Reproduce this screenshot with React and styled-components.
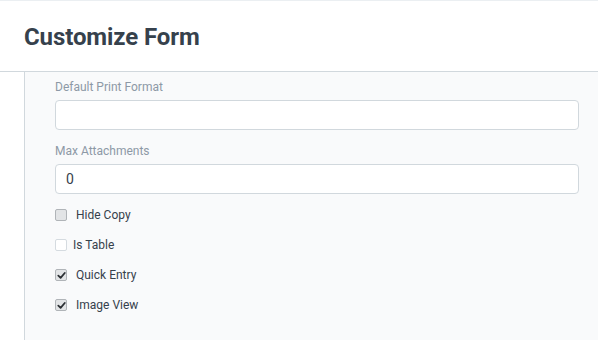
import React from "react";
import styled, { createGlobalStyle } from "styled-components";

const Global = createGlobalStyle`
  html, body { margin: 0; padding: 0; background: #fff; }
  body { font-family: Roboto, "Noto Sans", sans-serif; color: #36414c; }
`;

const Page = styled.div`
  width: 598px;
  height: 340px;
  overflow: hidden;
  border-top: 1px solid #ebeff2;
  box-sizing: border-box;
  display: flex;
  flex-direction: column;
`;

const Header = styled.div`
  height: 70px;
  display: flex;
  align-items: center;
  padding-left: 24px;
  border-bottom: 1px solid #d1d8dd;
  flex-shrink: 0;
`;

const Title = styled.h1`
  margin: 0;
  font-size: 24px;
  font-weight: 700;
  color: #36414c;
  letter-spacing: -0.1px;
  line-height: 1;
  padding-top: 2px;
`;

const Body = styled.div`
  display: flex;
  height: 268px;
  border-bottom: 1px solid #e5e8eb;
  flex-shrink: 0;
`;

const Gutter = styled.div`
  width: 24px;
  border-right: 1px solid #d1d8dd;
  flex-shrink: 0;
`;

const Main = styled.div`
  flex: 1;
  background: #f9fafb;
  padding: 8px 19px 0 30px;
  display: flex;
  flex-direction: column;
`;

const Field = styled.div`
  display: flex;
  flex-direction: column;
  margin-bottom: ${(p) => p.mb || 0}px;
`;

const Label = styled.label`
  font-size: 12px;
  color: #8d99a6;
  line-height: 14px;
  margin-bottom: 6px;
`;

const Input = styled.div`
  height: 28px;
  border: 1px solid #d1d8dd;
  border-radius: 4px;
  background: #fff;
  display: flex;
  align-items: center;
  padding-left: 10px;
  font-size: 14px;
  color: #36414c;
`;

const CheckList = styled.div`
  display: flex;
  flex-direction: column;
  margin-top: 6px;
`;

const CheckRow = styled.div`
  height: 30px;
  display: flex;
  align-items: center;
  gap: ${(p) => (p.disabled ? 6 : 9)}px;
  font-size: 12px;
  color: #36414c;
`;

const Box = styled.span`
  width: 10px;
  height: 10px;
  border-radius: 2px;
  border: 1px solid ${(p) => (p.disabled ? "#d5dbe0" : "#b0b4b8")};
  background: ${(p) => (p.disabled ? "#fff" : "#e2e4e6")};
  display: inline-flex;
  align-items: center;
  justify-content: center;
  flex-shrink: 0;
`;

function Check({ checked, disabled, children }) {
  return (
    <CheckRow disabled={disabled}>
      <Box disabled={disabled}>
        {checked && (
          <svg width="9" height="9" viewBox="0 0 10 10">
            <path d="M1.5 5.2 L4 7.6 L8.6 2.2" fill="none" stroke="#2b2f33" strokeWidth="2" strokeLinecap="round" strokeLinejoin="round" />
          </svg>
        )}
      </Box>
      <span>{children}</span>
    </CheckRow>
  );
}

export default function App() {
  return (
    <>
      <Global />
      <Page>
        <Header>
          <Title>Customize Form</Title>
        </Header>
        <Body>
          <Gutter />
          <Main>
            <Field mb={14}>
              <Label>Default Print Format</Label>
              <Input />
            </Field>
            <Field>
              <Label>Max Attachments</Label>
              <Input>0</Input>
            </Field>
            <CheckList>
              <Check>Hide Copy</Check>
              <Check disabled>Is Table</Check>
              <Check checked>Quick Entry</Check>
              <Check checked>Image View</Check>
            </CheckList>
          </Main>
        </Body>
      </Page>
    </>
  );
}
